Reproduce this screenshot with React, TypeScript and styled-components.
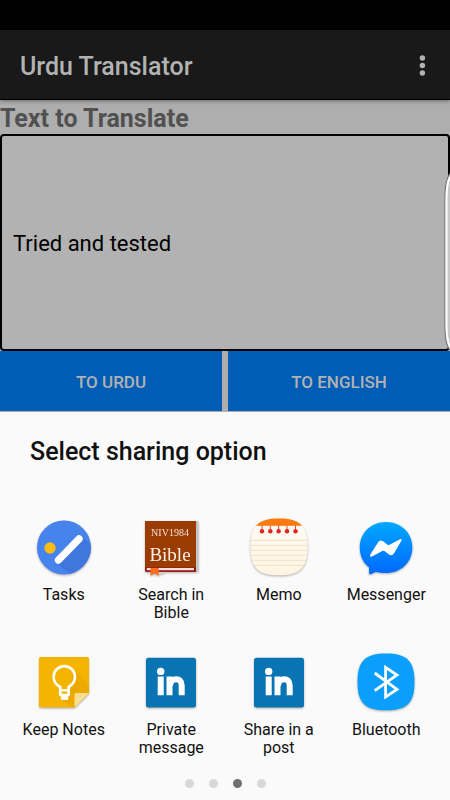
import React from "react";
import styled, { createGlobalStyle } from "styled-components";

const GlobalStyle = createGlobalStyle`
  *, *::before, *::after { box-sizing: border-box; }
  body { margin: 0; background: #fafafa; font-family: Roboto, "Liberation Sans", sans-serif; }
  button, input { font-family: inherit; }
`;

const Screen = styled.div`
  display: flex;
  flex-direction: column;
  min-height: 100vh;
`;

const StatusBar = styled.div`
  height: 30px;
  background: #000;
`;

const AppBar = styled.header`
  position: relative;
  z-index: 1;
  display: flex;
  align-items: center;
  justify-content: space-between;
  min-height: 70px;
  padding: 0 16px 0 20px;
  background: #191919;
  border-bottom: 1px solid #000;
  box-shadow: 0 1px 4px rgba(0, 0, 0, 0.4);
  color: #b2b2b2;
`;

const AppTitle = styled.h1`
  margin: 0;
  padding-top: 4px;
  font-size: 25px;
  line-height: 30px;
  font-weight: 500;
`;

const MenuButton = styled.button`
  display: flex;
  padding: 0;
  border: 0;
  background: none;
  color: inherit;
`;

const Workspace = styled.main`
  position: relative;
  display: flex;
  flex-direction: column;
  background: #aeaeae;
`;

const FieldLabel = styled.label`
  padding-top: 4px;
  font-size: 25px;
  line-height: 30px;
  font-weight: 700;
  color: #515151;
`;

const SourceInput = styled.input`
  width: 100%;
  height: 217px;
  padding: 2px 11px 0;
  border: 2px solid #000;
  border-radius: 4px;
  outline: 0;
  background: #b2b2b2;
  color: #000;
  font-size: 22px;
`;

const Actions = styled.div`
  display: flex;
  gap: 6px;
  padding-bottom: 1px;
`;

const ActionButton = styled.button`
  flex: 1;
  height: 60px;
  padding: 2px 0 0;
  border: 0;
  background: #005cb4;
  color: #b2b2b2;
  font-size: 17px;
  font-weight: 500;
`;

const EdgeHandle = styled.svg`
  position: absolute;
  right: 0;
  bottom: 61px;
  width: 7px;
  height: 178px;
`;

const Sheet = styled.section`
  flex: 1;
  display: flex;
  flex-direction: column;
  background: #fafafa;
`;

const SheetTitle = styled.h2`
  margin: 0;
  padding: 25px 30px 50px;
  font-size: 25px;
  line-height: 30px;
  font-weight: 500;
  color: #111;
`;

const AppGrid = styled.div`
  display: grid;
  grid-template-columns: repeat(4, 1fr);
  grid-auto-rows: 135px;
  padding: 0 10px;
`;

const AppItem = styled.button`
  display: flex;
  flex-direction: column;
  align-items: center;
  justify-content: flex-start;
  gap: 9px;
  padding: 0;
  border: 0;
  background: none;
  color: #111;
`;

const AppIcon = styled.svg`
  display: block;
  width: 60px;
  height: 60px;
  filter: drop-shadow(0 1px 1px rgba(0, 0, 0, 0.3));
`;

const AppName = styled.span`
  width: 92px;
  font-size: 16px;
  line-height: 18px;
  text-align: center;
`;

const Pager = styled.nav`
  display: flex;
  justify-content: center;
  gap: 15px;
  margin-top: -8px;
  padding-bottom: 12px;
`;

const PageDot = styled.button<{ $active: boolean }>`
  width: 9px;
  height: 9px;
  padding: 0;
  border: 0;
  border-radius: 50%;
  background: ${(p) => (p.$active ? "#707070" : "#d8d8d8")};
`;

const TasksIcon = () => (
  <AppIcon viewBox="0 0 60 60" aria-hidden="true">
    <defs>
      <clipPath id="tasksClip"><circle cx="30" cy="30.5" r="27" /></clipPath>
    </defs>
    <circle cx="30" cy="30.5" r="27" fill="#4683ec" />
    <path d="M47.5 19 L60 31 V60 H40 L22 45.5Z" fill="#3d72d6" opacity=".7" clipPath="url(#tasksClip)" />
    <circle cx="16" cy="31" r="5.7" fill="#fbbc16" />
    <path d="M24.5 43 L45 22" stroke="#fff" strokeWidth="7.4" strokeLinecap="round" />
  </AppIcon>
);

const BibleIcon = () => (
  <AppIcon viewBox="0 0 60 60" aria-hidden="true">
    <path d="M54 4 H57.5 V54.5 H54Z" fill="#c4c4c4" />
    <path d="M17 55 H26 L17 58Z" fill="#d4d4d4" />
    <path d="M4 4 H55 V54.7 H5.5 Q4 54.7 4 53Z" fill="#9a3b00" />
    <path d="M4 50.4 H55 V54.7 H5.5 Q4 54.7 4 53Z" fill="#970f0f" />
    <path d="M6 51 H53 V53.2 H6 Q5 52 6 51Z" fill="#f5dede" />
    <path d="M9.5 51 H17.7 V58.8 L13.6 56.4 L9.5 58.8Z" fill="#fb6c20" />
    <text x="29" y="18.7" textAnchor="middle" fontFamily="Liberation Serif, serif" fontSize="10" fill="#f7e2d8">NIV1984</text>
    <text x="29" y="43.7" textAnchor="middle" fontFamily="Liberation Serif, serif" fontSize="19" fill="#fff0ea">Bible</text>
  </AppIcon>
);

const squircle =
  "M30 1.5 C51 1.5 58.5 9 58.5 30 C58.5 51 51 58.3 30 58.3 C9 58.3 1.5 51 1.5 30 C1.5 9 9 1.5 30 1.5Z";

const MemoIcon = () => (
  <AppIcon viewBox="0 0 60 60" aria-hidden="true">
    <defs>
      <clipPath id="memoClip"><path d={squircle} /></clipPath>
      <linearGradient id="memoPaper" x1="0" y1="0" x2="0" y2="1">
        <stop offset="0" stopColor="#fffdf8" />
        <stop offset="1" stopColor="#fff4e0" />
      </linearGradient>
    </defs>
    <g clipPath="url(#memoClip)">
      <rect width="60" height="60" fill="url(#memoPaper)" />
      <rect width="60" height="8.8" fill="#fa7a0d" />
      {[23.3, 28.3, 33.3, 38.3, 43.3, 48.3].map((y) => (
        <path key={y} d={`M0 ${y}H60`} stroke="#f3dfc8" strokeWidth="1" />
      ))}
    </g>
    {[13, 21.3, 29.6, 38, 46.5].map((x) => (
      <g key={x}>
        <path d={`M${x} 8.5V14`} stroke="#f0492c" strokeWidth="1" />
        <circle cx={x} cy="14.3" r="2.2" fill="#e8221d" />
      </g>
    ))}
  </AppIcon>
);

const MessengerIcon = () => (
  <AppIcon viewBox="0 0 60 60" aria-hidden="true">
    <defs>
      <linearGradient id="messengerBlue" x1="0" y1="0" x2="0" y2="1">
        <stop offset="0" stopColor="#00a8ff" />
        <stop offset="1" stopColor="#0068ff" />
      </linearGradient>
    </defs>
    <path
      d="M30 5 C45 5 56.4 16 56.4 30.4 C56.4 45 45 56 30 56 C26 56 22.5 55.4 19.5 55 L14.8 57.2 Q13 57.8 13 56 V50.2 C7 45.5 3.8 39 3.8 30.4 C3.8 16 15 5 30 5Z"
      fill="url(#messengerBlue)"
    />
    <path
      d="M14.3 37.6 L22 25.4 Q24 22.5 27 24.3 L31.6 27.8 Q32.6 28.4 33.6 27.8 L44 22.2 Q46.5 21.2 45.4 23.7 L38.2 36 Q36.2 39.6 33 37.6 L28.5 34 Q27.4 33.3 26.2 34 L15.6 39.7 Q13.2 40.2 14.3 37.6Z"
      fill="#fff"
    />
  </AppIcon>
);

const KeepIcon = () => (
  <AppIcon viewBox="0 0 60 60" aria-hidden="true">
    <path d="M7 5 H53 Q55 5 55 7 V41 L40.5 55.5 H7 Q5 55.5 5 53.5 V7 Q5 5 7 5Z" fill="#f4b400" />
    <path d="M39 17 L55 33 V41 L40.5 55.5 L27 48 L35 44Z" fill="#e6a400" opacity=".6" />
    <path d="M40.5 43 Q40.5 41 42.5 41 H55 L40.5 55.5Z" fill="#fbdf90" />
    <path
      d="M26.2 43 V35 C22 32.8 19.6 29 19.6 24.8 A10.7 10.7 0 0 1 41 24.8 C41 29 38.4 32.8 34.6 35 V43Z M26 38.2 H35"
      fill="none" stroke="#fff" strokeWidth="2.6" strokeLinejoin="round"
    />
    <rect x="27" y="44" width="7.2" height="3.8" fill="#fff" />
  </AppIcon>
);

const LinkedInIcon = () => (
  <AppIcon viewBox="0 0 60 60" aria-hidden="true">
    <rect x="5" y="5.7" width="50" height="49.7" rx="2.5" fill="#0874b3" />
    <circle cx="19.7" cy="19.4" r="3.7" fill="#fff" />
    <path d="M19.7 24.5 V43.3 M28.5 24.5 V43.3" stroke="#fff" strokeWidth="6" />
    <path d="M29 34 C29 25.5 40.7 24.4 40.7 33.5 V43.3" fill="none" stroke="#fff" strokeWidth="6" />
  </AppIcon>
);

const BluetoothIcon = () => (
  <AppIcon viewBox="0 0 60 60" aria-hidden="true">
    <path d={squircle} fill="#0a9ffc" />
    <path d="M18.7 21 L41 37.4 L29.6 45 V15.3 L41 23 L18.7 38.7" fill="none" stroke="#fff" strokeWidth="2.8" />
  </AppIcon>
);

const apps = [
  { name: "Tasks", Icon: TasksIcon },
  { name: "Search in Bible", Icon: BibleIcon },
  { name: "Memo", Icon: MemoIcon },
  { name: "Messenger", Icon: MessengerIcon },
  { name: "Keep Notes", Icon: KeepIcon },
  { name: "Private message", Icon: LinkedInIcon },
  { name: "Share in a post", Icon: LinkedInIcon },
  { name: "Bluetooth", Icon: BluetoothIcon },
];

export default function App() {
  return (
    <>
      <GlobalStyle />
      <Screen>
        <StatusBar />
        <AppBar>
          <AppTitle>Urdu Translator</AppTitle>
          <MenuButton type="button" aria-label="More options">
            <svg width="24" height="24" viewBox="0 0 24 24" fill="currentColor" aria-hidden="true">
              <circle cx="12.4" cy="5" r="2.7" />
              <circle cx="12.4" cy="12.5" r="2.7" />
              <circle cx="12.4" cy="20" r="2.7" />
            </svg>
          </MenuButton>
        </AppBar>
        <Workspace>
          <FieldLabel htmlFor="source">Text to Translate</FieldLabel>
          <SourceInput id="source" type="text" defaultValue="Tried and tested" />
          <Actions>
            <ActionButton type="button">TO URDU</ActionButton>
            <ActionButton type="button">TO ENGLISH</ActionButton>
          </Actions>
          <EdgeHandle viewBox="0 0 7 178" aria-hidden="true">
            <path d="M7 0 C3.5 5 2 12 2 24 V154 C2 166 3.5 173 7 178Z" fill="#c8c8c8" />
            <path d="M6.5 1 C3.5 6 2 13 2 24 V154 C2 165 3.5 172 6.5 177" fill="none" stroke="#6a6a6a" strokeWidth="1" />
            <path d="M7 4 C4.5 9 3.5 15 3.5 26 V152 C3.5 163 4.5 169 7 174" fill="none" stroke="#fff" strokeWidth="2" />
          </EdgeHandle>
        </Workspace>
        <Sheet>
          <SheetTitle>Select sharing option</SheetTitle>
          <AppGrid>
            {apps.map(({ name, Icon }) => (
              <AppItem key={name} type="button">
                <Icon />
                <AppName>{name}</AppName>
              </AppItem>
            ))}
          </AppGrid>
          <Pager aria-label="Pages">
            {[1, 2, 3, 4].map((page) => (
              <PageDot key={page} type="button" $active={page === 3} aria-label={`Page ${page}`} />
            ))}
          </Pager>
        </Sheet>
      </Screen>
    </>
  );
}
